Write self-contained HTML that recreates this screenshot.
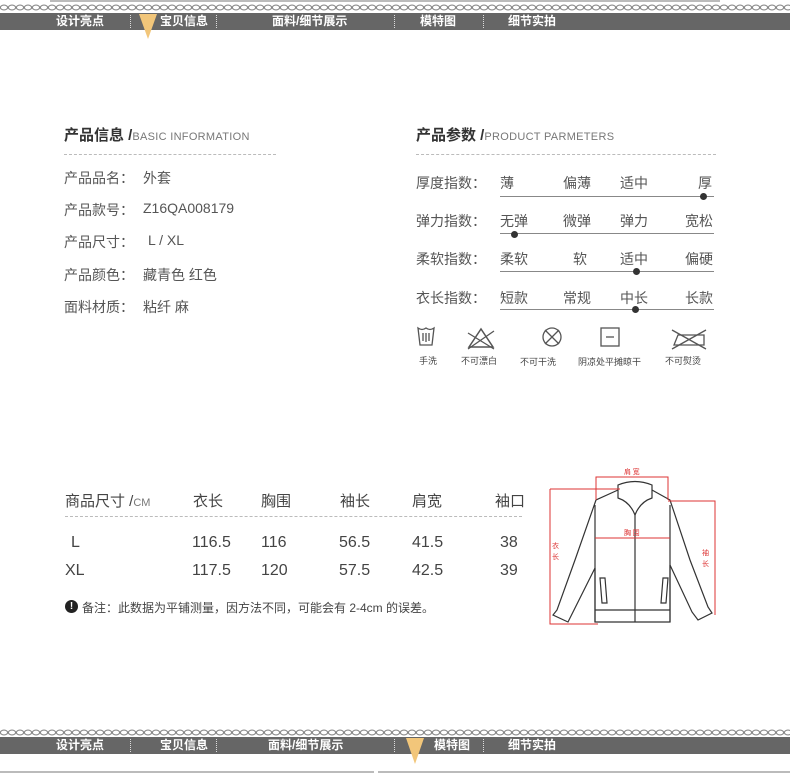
<!DOCTYPE html>
<html><head><meta charset="utf-8"><style>
*{margin:0;padding:0;box-sizing:border-box}
body{width:790px;height:773px;background:#fff;position:relative;overflow:hidden;font-family:"Liberation Sans","Noto Sans CJK SC",sans-serif;color:#555}
.a{position:absolute;white-space:nowrap}
.bar{position:absolute;left:0;width:790px;height:17px;background:#666}
.bar span{position:absolute;top:1px;color:#fff;font-size:12px;font-weight:bold;line-height:15px}
.sep{position:absolute;top:2px;height:13px;border-left:1px dotted #ddd}
.h{font-size:15px;font-weight:bold;color:#333}
.h small{font-size:11px;font-weight:normal;color:#777;letter-spacing:0.3px}
.dash{position:absolute;height:0;border-top:1px dashed #bbb}
.l{font-size:14px;color:#555}
.r{font-size:14px;color:#555}
.line{position:absolute;height:1px;background:#888}
.dot{position:absolute;width:7px;height:7px;border-radius:50%;background:#333}
.ic{font-size:9px;color:#444}
.t{font-size:15px;color:#444}
</style></head><body>
<div class="a" style="left:50px;top:0;width:670px;height:2px;background:#bbb"></div>
<svg class="a" style="left:0;top:3px" width="790" height="9"><defs><pattern id="c" width="8" height="9" patternUnits="userSpaceOnUse"><ellipse cx="4" cy="4.5" rx="3.6" ry="2.4" fill="none" stroke="#888" stroke-width="1.1"/></pattern></defs><rect width="790" height="9" fill="url(#c)"/></svg>
<div class="bar" style="top:13px">
<span style="left:56px">设计亮点</span><div class="sep" style="left:130px"></div>
<span style="left:160px">宝贝信息</span><div class="sep" style="left:216px"></div>
<span style="left:272px">面料/细节展示</span><div class="sep" style="left:394px"></div>
<span style="left:420px">模特图</span><div class="sep" style="left:483px"></div>
<span style="left:508px">细节实拍</span>
</div>
<svg class="a" style="left:138px;top:14px" width="20" height="26"><polygon points="1,0 19,0 10,25" fill="#f2c67a"/></svg>

<div class="a h" style="left:64px;top:124px">产品信息 /<small>BASIC INFORMATION</small></div>
<div class="dash" style="left:64px;top:154px;width:212px"></div>
<div class="a l" style="left:64px;top:168px">产品品名：</div><div class="a l" style="left:143px;top:168px">外套</div>
<div class="a l" style="left:64px;top:200px">产品款号：</div><div class="a l" style="left:143px;top:200px">Z16QA008179</div>
<div class="a l" style="left:64px;top:232px">产品尺寸：</div><div class="a l" style="left:148px;top:232px">L / XL</div>
<div class="a l" style="left:64px;top:265px">产品颜色：</div><div class="a l" style="left:143px;top:265px">藏青色 红色</div>
<div class="a l" style="left:64px;top:297px">面料材质：</div><div class="a l" style="left:143px;top:297px">粘纤 麻</div>

<div class="a h" style="left:416px;top:124px">产品参数 /<small>PRODUCT PARMETERS</small></div>
<div class="dash" style="left:416px;top:154px;width:300px"></div>

<div class="a r" style="left:416px;top:173px">厚度指数：</div>
<div class="a r" style="left:500px;top:173px">薄</div><div class="a r" style="left:563px;top:173px">偏薄</div><div class="a r" style="left:620px;top:173px">适中</div><div class="a r" style="left:698px;top:173px">厚</div>
<div class="line" style="left:500px;top:196px;width:214px"></div><div class="dot" style="left:700px;top:193px"></div>

<div class="a r" style="left:416px;top:211px">弹力指数：</div>
<div class="a r" style="left:500px;top:211px">无弹</div><div class="a r" style="left:563px;top:211px">微弹</div><div class="a r" style="left:620px;top:211px">弹力</div><div class="a r" style="left:685px;top:211px">宽松</div>
<div class="line" style="left:500px;top:233px;width:214px"></div><div class="dot" style="left:511px;top:231px"></div>

<div class="a r" style="left:416px;top:249px">柔软指数：</div>
<div class="a r" style="left:500px;top:249px">柔软</div><div class="a r" style="left:573px;top:249px">软</div><div class="a r" style="left:620px;top:249px">适中</div><div class="a r" style="left:685px;top:249px">偏硬</div>
<div class="line" style="left:500px;top:271px;width:214px"></div><div class="dot" style="left:633px;top:268px"></div>

<div class="a r" style="left:416px;top:288px">衣长指数：</div>
<div class="a r" style="left:500px;top:288px">短款</div><div class="a r" style="left:563px;top:288px">常规</div><div class="a r" style="left:620px;top:288px">中长</div><div class="a r" style="left:685px;top:288px">长款</div>
<div class="line" style="left:500px;top:309px;width:214px"></div><div class="dot" style="left:632px;top:306px"></div>

<svg class="a" style="left:414px;top:325px" width="300" height="26" fill="none" stroke="#555" stroke-width="1.3">
<path d="M4,3 Q8,6 12,3 Q16,6 20,3 L18,20 L6,20 Z"/><path d="M9,8 V16 M12,8 V17 M15,8 V16"/>
<path d="M55,22 L67,4 L79,22 Z" stroke-width="1.5"/><path d="M54,8 L80,24 M54,24 L80,6"/>
<circle cx="138" cy="12" r="9"/><path d="M131,5 L145,19 M145,5 L131,19"/>
<rect x="187" y="3" width="18" height="18"/><path d="M192,12 H200"/>
<path d="M260,20 L264,10 L290,10 L290,20 Z"/><path d="M258,5 L292,24 M258,24 L292,5"/>
</svg>
<div class="a ic" style="left:419px;top:354px">手洗</div>
<div class="a ic" style="left:461px;top:354px">不可漂白</div>
<div class="a ic" style="left:520px;top:355px">不可干洗</div>
<div class="a ic" style="left:578px;top:355px">阴凉处平摊晾干</div>
<div class="a ic" style="left:665px;top:354px">不可熨烫</div>

<div class="a t" style="left:65px;top:490px">商品尺寸 /<span style="font-size:11px;color:#777">CM</span></div>
<div class="a t" style="left:193px;top:490px">衣长</div>
<div class="a t" style="left:261px;top:490px">胸围</div>
<div class="a t" style="left:340px;top:490px">袖长</div>
<div class="a t" style="left:412px;top:490px">肩宽</div>
<div class="a t" style="left:495px;top:490px">袖口</div>
<div class="dash" style="left:65px;top:516px;width:457px"></div>
<div class="a t" style="left:71px;top:534px;font-size:16px">L</div>
<div class="a t" style="left:192px;top:534px;font-size:16px">116.5</div>
<div class="a t" style="left:261px;top:534px;font-size:16px">116</div>
<div class="a t" style="left:339px;top:534px;font-size:16px">56.5</div>
<div class="a t" style="left:412px;top:534px;font-size:16px">41.5</div>
<div class="a t" style="left:500px;top:534px;font-size:16px">38</div>
<div class="a t" style="left:65px;top:562px;font-size:16px">XL</div>
<div class="a t" style="left:192px;top:562px;font-size:16px">117.5</div>
<div class="a t" style="left:261px;top:562px;font-size:16px">120</div>
<div class="a t" style="left:339px;top:562px;font-size:16px">57.5</div>
<div class="a t" style="left:412px;top:562px;font-size:16px">42.5</div>
<div class="a t" style="left:500px;top:562px;font-size:16px">39</div>
<div class="a" style="left:65px;top:600px;width:13px;height:13px;border-radius:50%;background:#222;color:#fff;font-size:10px;font-weight:bold;text-align:center;line-height:13px">!</div>
<div class="a" style="left:82px;top:599px;font-size:12px;color:#444">备注：此数据为平铺测量，因方法不同，可能会有 2-4cm 的误差。</div>

<svg class="a" style="left:540px;top:460px" width="190" height="170" fill="none">
<g stroke="#333" stroke-width="1.2">
<path d="M78,25 Q95,18 112,25 L112,38 Q100,42 95,55 Q90,42 78,38 Z"/>
<path d="M78,30 L56,40 L35,100 L17,150 L13,155 L28,162 L33,152 L55,108 L55,162 L130,162 L130,105 L152,152 L158,160 L172,153 L168,147 L150,100 L130,40 L112,30"/>
<path d="M95,55 V162 M55,45 V162 M130,45 V162 M55,150 H130"/>
<path d="M60,118 L65,118 L67,143 L62,143 Z M123,118 L128,118 L126,143 L121,143 Z"/>
</g>
<g stroke="#d33" stroke-width="1">
<path d="M56,40 V17 H128 V40 M10,29 H80 M10,29 V164 H58 M128,41 H175 V155 M55,78 H130"/>
</g>
<g fill="#d33" font-size="7" font-family="Noto Sans CJK SC,sans-serif" stroke="none">
<text x="84" y="14">肩 宽</text><text x="84" y="75">胸 围</text><text x="12" y="88">衣</text><text x="12" y="99">长</text><text x="162" y="95">袖</text><text x="162" y="106">长</text>
</g>
</svg>

<svg class="a" style="left:0;top:728px" width="790" height="9"><rect width="790" height="9" fill="url(#c)"/></svg>
<div class="bar" style="top:737px">
<span style="left:56px">设计亮点</span><div class="sep" style="left:130px"></div>
<span style="left:160px">宝贝信息</span><div class="sep" style="left:216px"></div>
<span style="left:268px">面料/细节展示</span><div class="sep" style="left:394px"></div>
<span style="left:434px">模特图</span><div class="sep" style="left:483px"></div>
<span style="left:508px">细节实拍</span>
</div>
<svg class="a" style="left:405px;top:738px" width="20" height="27"><polygon points="1,0 19,0 10,26" fill="#f2c67a"/></svg>
<div class="a" style="left:0;top:771px;width:374px;height:2px;background:#bbb"></div>
<div class="a" style="left:378px;top:771px;width:412px;height:2px;background:#bbb"></div>
</body></html>
